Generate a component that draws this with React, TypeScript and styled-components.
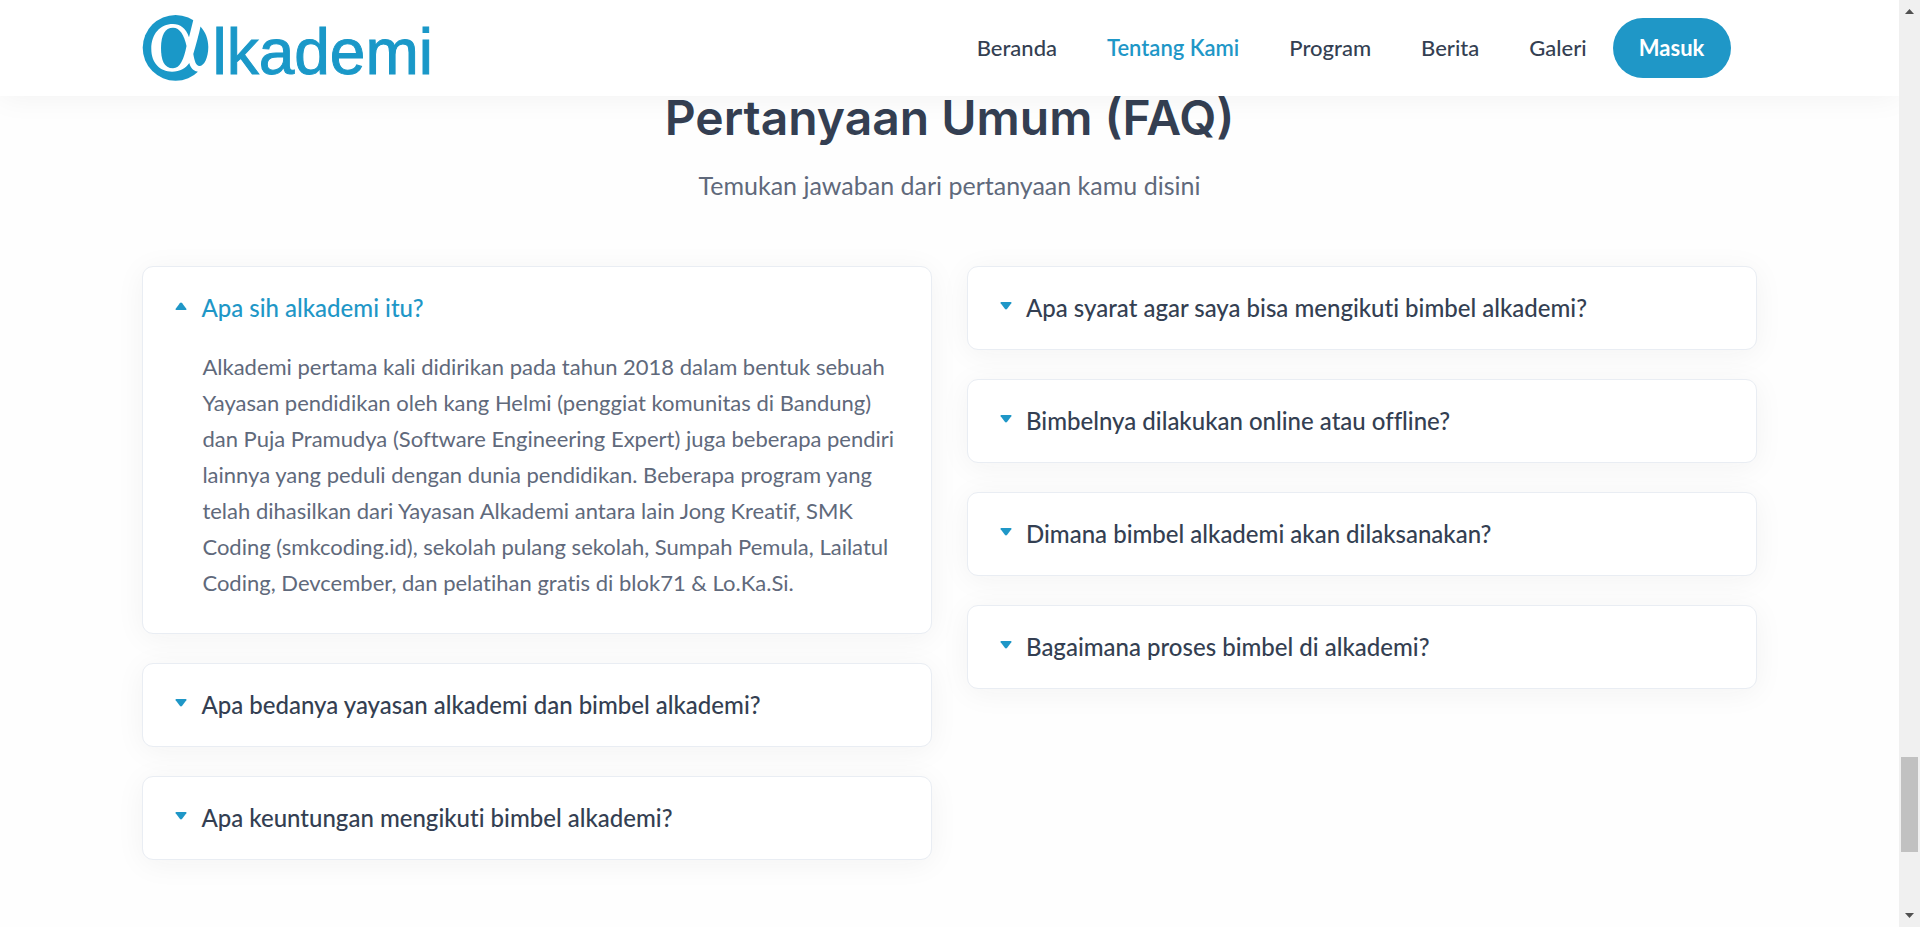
import React, { useState } from "react";
import styled, { createGlobalStyle } from "styled-components";

const BLUE = "#1f97c7";
const LOGO_BLUE = "#1a98c8";
const INK = "#343f52";
const SLATE = "#60697b";

const GlobalStyle = createGlobalStyle`
  *, *::before, *::after { box-sizing: border-box; }
  body {
    margin: 0;
    background: #fefefe;
    color: ${SLATE};
    font-family: Lato, "Liberation Sans", sans-serif;
    font-variant-ligatures: none;
  }
  h2, h3, p, ul { margin: 0; padding: 0; }
`;

const Page = styled.div`
  display: grid;
  grid-template-columns: minmax(0, 1fr) 21px;
  min-height: 100vh;
`;

const Content = styled.div`
  min-width: 0;
`;

const Container = styled.div`
  width: 85%;
  margin: 0 auto;
`;

const Header = styled.header`
  position: relative;
  z-index: 1;
  background: #fff;
  box-shadow: 0 0 30px rgba(30, 34, 40, 0.06);
`;

const HeaderRow = styled(Container)`
  display: flex;
  align-items: center;
  justify-content: space-between;
  min-height: 96px;
`;

const Brand = styled.a`
  display: flex;
  align-items: center;
  gap: 2px;
  color: ${LOGO_BLUE};
  text-decoration: none;
`;

const Mark = styled.svg`
  width: 68px;
  height: 68px;
`;

const Wordmark = styled.span`
  padding-top: 8px;
  font: 400 64px/68px "Liberation Sans", Arial, sans-serif;
  -webkit-text-stroke: 1px currentColor;
`;

const Nav = styled.nav`
  display: flex;
  align-items: center;
  gap: 26px;
  padding-right: 26px;
`;

const NavList = styled.ul`
  display: flex;
  gap: 50px;
  list-style: none;
`;

const NavLink = styled.a<{ $active?: boolean }>`
  color: ${(p) => (p.$active ? BLUE : INK)};
  font-size: 22px;
  font-weight: ${(p) => (p.$active ? 600 : 500)};
  line-height: 30px;
  text-decoration: none;
`;

const LoginButton = styled.button`
  width: 118px;
  height: 60px;
  border: 0;
  border-radius: 30px;
  background: ${BLUE};
  color: #fff;
  font: 700 22px/30px Lato, sans-serif;
  cursor: pointer;
`;

const Title = styled.h2`
  color: ${INK};
  font: 600 48px/44px Inter, sans-serif;
  text-align: center;
`;

const Lead = styled.p`
  margin-top: 27px;
  font-size: 25px;
  line-height: 36px;
  text-align: center;
`;

const Columns = styled.div`
  display: grid;
  grid-template-columns: 1fr 1fr;
  align-items: start;
  gap: 35px;
  padding: 63px 0 66px;
`;

const Column = styled.div`
  display: grid;
  gap: 29px;
`;

const Card = styled.article`
  border: 1px solid #e9edf3;
  border-radius: 11px;
  background: #fff;
  box-shadow: 0 4px 30px rgba(30, 34, 40, 0.05);
`;

const Question = styled.button<{ $open: boolean }>`
  display: flex;
  align-items: center;
  gap: 14px;
  width: 100%;
  padding: 24px 32px;
  border: 0;
  background: none;
  color: ${(p) => (p.$open ? BLUE : INK)};
  font: 500 24px/34px Lato, sans-serif;
  font-variant-ligatures: none;
  text-align: left;
  cursor: pointer;
`;

const Caret = styled.svg<{ $open: boolean }>`
  flex: none;
  width: 12px;
  height: 12px;
  margin-bottom: 4px;
  fill: ${BLUE};
  transform: ${(p) => (p.$open ? "rotate(180deg)" : "none")};
`;

const Answer = styled.p`
  padding: 0 26px 32px 59px;
  font-size: 22px;
  line-height: 36px;
`;

const Scrollbar = styled.div`
  display: flex;
  flex-direction: column;
  align-items: center;
  background: #f0f0f0;
  position: relative;
  z-index: 2;
`;

const ScrollArrow = styled.svg`
  width: 21px;
  height: 21px;
  fill: #505050;
`;

const ScrollGap = styled.div<{ $share: number }>`
  flex: ${(p) => p.$share} 0 0;
`;

const Thumb = styled.div`
  width: 17px;
  height: 95px;
  background: #c1c1c1;
`;

type Item = { question: string; answer?: string };

const LEFT: Item[] = [
  {
    question: "Apa sih alkademi itu?",
    answer:
      "Alkademi pertama kali didirikan pada tahun 2018 dalam bentuk sebuah Yayasan pendidikan oleh kang Helmi (penggiat komunitas di Bandung) dan Puja Pramudya (Software Engineering Expert) juga beberapa pendiri lainnya yang peduli dengan dunia pendidikan. Beberapa program yang telah dihasilkan dari Yayasan Alkademi antara lain Jong Kreatif, SMK Coding (smkcoding.id), sekolah pulang sekolah, Sumpah Pemula, Lailatul Coding, Devcember, dan pelatihan gratis di blok71 & Lo.Ka.Si.",
  },
  { question: "Apa bedanya yayasan alkademi dan bimbel alkademi?" },
  { question: "Apa keuntungan mengikuti bimbel alkademi?" },
];

const RIGHT: Item[] = [
  { question: "Apa syarat agar saya bisa mengikuti bimbel alkademi?" },
  { question: "Bimbelnya dilakukan online atau offline?" },
  { question: "Dimana bimbel alkademi akan dilaksanakan?" },
  { question: "Bagaimana proses bimbel di alkademi?" },
];

const NAV = ["Beranda", "Tentang Kami", "Program", "Berita", "Galeri"];

function FaqCard({ item }: { item: Item }) {
  const [open, setOpen] = useState(Boolean(item.answer));
  return (
    <Card>
      <h3>
        <Question $open={open} aria-expanded={open} onClick={() => setOpen(!open)}>
          <Caret $open={open} viewBox="0 0 12 12" aria-hidden="true">
            <path d="M1.300 2h9.400q1.300 0 .6 1.300L7.200 8.800q-1.200 1.600-2.400 0L.7 3.300Q0 2 1.300 2Z" />
          </Caret>
          {item.question}
        </Question>
      </h3>
      {open && item.answer && <Answer>{item.answer}</Answer>}
    </Card>
  );
}

export default function App() {
  return (
    <Page>
      <GlobalStyle />
      <Content>
        <Header>
          <HeaderRow>
            <Brand href="#" aria-label="Alkademi">
              <Mark viewBox="0 0 68 68" aria-hidden="true">
                <circle cx="33.6" cy="33.8" r="32.9" fill={LOGO_BLUE} />
                <path
                  fill="#fff"
                  d="M52 0L51.300 6L47 23.300C44 14 38 10 31 10C18 10 9.300 20 9.300 35C9.300 49 18 57.700 30 57.700C38 57.700 44 54 47.300 49C48.500 53.500 51 57 55.500 57.500L57 62H70V0Z"
                />
                <path
                  fill={LOGO_BLUE}
                  d="M31 13.700C38 13.700 42 21 44.500 32C42 45 38 54.300 31 54.300C22 54.300 19 46 19 34C19 21 23 13.700 31 13.700Z"
                />
                <path
                  fill={LOGO_BLUE}
                  d="M58.500 12.500C63.500 18 66.300 25 66.300 33C66.300 44 62 52 57.500 52C54 52 52.500 47 51.300 40C54 31 57 20 58.500 12.500Z"
                />
              </Mark>
              <Wordmark>lkademi</Wordmark>
            </Brand>
            <Nav>
              <NavList>
                {NAV.map((label) => (
                  <li key={label}>
                    <NavLink href="#" $active={label === "Tentang Kami"}>
                      {label}
                    </NavLink>
                  </li>
                ))}
              </NavList>
              <LoginButton>Masuk</LoginButton>
            </Nav>
          </HeaderRow>
        </Header>
        <Container as="main">
          <Title>Pertanyaan Umum (FAQ)</Title>
          <Lead>Temukan jawaban dari pertanyaan kamu disini</Lead>
          <Columns>
            <Column>
              {LEFT.map((item) => (
                <FaqCard key={item.question} item={item} />
              ))}
            </Column>
            <Column>
              {RIGHT.map((item) => (
                <FaqCard key={item.question} item={item} />
              ))}
            </Column>
          </Columns>
        </Container>
      </Content>
      <Scrollbar aria-hidden="true">
        <ScrollArrow viewBox="0 0 21 21">
          <path d="M6 14h9l-4.500-5Z" />
        </ScrollArrow>
        <ScrollGap $share={736} />
        <Thumb />
        <ScrollGap $share={54} />
        <ScrollArrow viewBox="0 0 21 21">
          <path d="M6 7h9l-4.500 5Z" />
        </ScrollArrow>
      </Scrollbar>
    </Page>
  );
}
